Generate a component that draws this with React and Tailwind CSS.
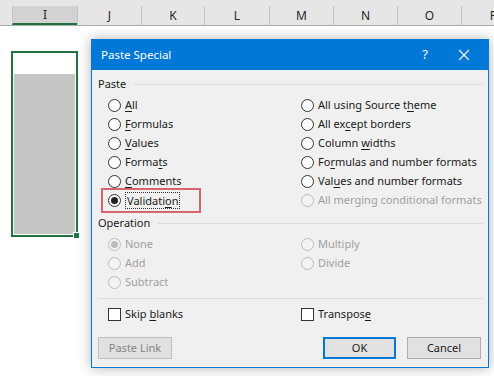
import React from 'react';

const COLS = [
  { label: 'I', w: 65, selected: true },
  { label: 'J', w: 64 },
  { label: 'K', w: 63 },
  { label: 'L', w: 65 },
  { label: 'M', w: 64 },
  { label: 'N', w: 64 },
  { label: 'O', w: 64 },
  { label: 'P', w: 64 },
];

// text with one underlined access key
const Label = ({ text, k }) => {
  if (k === undefined) return <span>{text}</span>;
  return (
    <span>
      {text.slice(0, k)}
      <span className="underline underline-offset-2">{text[k]}</span>
      {text.slice(k + 1)}
    </span>
  );
};

const Radio = ({ text, k, checked = false, disabled = false, focus = false }) => (
  <div className={`flex items-center h-[19px] gap-[4px] whitespace-nowrap ${disabled ? 'text-[#a0a0a0]' : 'text-[#1a1a1a]'}`}>
    <span
      className={`w-[13px] h-[13px] rounded-full border flex items-center justify-center shrink-0 ${
        disabled ? 'border-[#bcbcbc] bg-[#f3f3f3]' : 'border-[#333] bg-white'
      }`}
    >
      {checked && (
        <span className={`w-[7px] h-[7px] rounded-full ${disabled ? 'bg-[#bcbcbc]' : 'bg-[#222]'}`}></span>
      )}
    </span>
    <span className={focus ? 'border border-dotted border-[#333] px-[1px] leading-[15px]' : ''}>
      <Label text={text} k={k} />
    </span>
  </div>
);

const Check = ({ text, k }) => (
  <div className="flex items-center h-[19px] gap-[4px] text-[#1a1a1a] whitespace-nowrap">
    <span className="w-[13px] h-[13px] border border-[#333] bg-white shrink-0"></span>
    <Label text={text} k={k} />
  </div>
);

const GroupLabel = ({ children }) => (
  <div className="flex items-center gap-[8px] pr-[5px] h-[16px] text-[#1a1a1a]">
    <span>{children}</span>
    <span className="flex-1 h-px bg-[#dcdcdc]"></span>
  </div>
);

export default function App() {
  return (
    <div className="relative w-[494px] h-[376px] bg-white overflow-hidden font-['Segoe_UI','Noto_Sans',sans-serif]">
      {/* column headers */}
      <div className="h-[6px] bg-[#e6e6e6]"></div>
      <div className="flex h-[20px] bg-[#e6e6e6] border-b border-[#ababab] text-[#262626] text-[12px]">
        <div className="w-[12px] shrink-0"></div>
        {COLS.map((c) => (
          <div
            key={c.label}
            style={{ width: c.w }}
            className={`shrink-0 flex items-center justify-center border-l border-[#c4c4c4] ${
              c.selected ? 'bg-[#d2d2d2] border-b-2 border-b-[#217346]' : ''
            }`}
          >
            {c.label}
          </div>
        ))}
      </div>

      {/* selected range */}
      <div className="ml-[11px] mt-[25px] w-[67px] h-[186px] border-2 border-[#217346] relative">
        <div className="mt-[21px] ml-px w-[61px] h-[160px] bg-[#c6c6c6]"></div>
        <span className="absolute -right-[4px] -bottom-[4px] w-[7px] h-[7px] bg-[#217346] border border-white"></span>
      </div>

      {/* Paste Special dialog */}
      <div className="absolute left-[91px] top-[39px] w-[398px] h-[329px] border border-[#0078d7] bg-[#f0f0f0] shadow-[0_0_12px_rgba(0,0,0,0.3)] flex flex-col text-[11px]">
        <div className="h-[30px] bg-[#0078d7] text-white flex items-center pl-[9px] shrink-0">
          <span className="flex-1 text-[11.5px]">Paste Special</span>
          <span className="w-[18px] text-center mr-[24px] text-[13px]">?</span>
          <svg width="12" height="12" viewBox="0 0 12 12" className="mr-[18px]">
            <path d="M1 1L11 11M11 1L1 11" stroke="white" strokeWidth="1.1" />
          </svg>
        </div>

        <div className="pl-[6px] pt-[6px]">
          <GroupLabel>Paste</GroupLabel>
          <div className="grid grid-cols-[193px_1fr] pl-[10px] mt-[4px]">
            <div className="flex flex-col">
              <Radio text="All" k={0} />
              <Radio text="Formulas" k={0} />
              <Radio text="Values" k={0} />
              <Radio text="Formats" k={5} />
              <Radio text="Comments" k={0} />
              <div className="relative">
                <Radio text="Validation" k={8} checked focus />
                <span className="absolute -left-[7px] -top-[3px] w-[100px] h-[25px] border-2 border-[#d8646f]"></span>
              </div>
            </div>
            <div className="flex flex-col">
              <Radio text="All using Source theme" k={18} />
              <Radio text="All except borders" k={6} />
              <Radio text="Column widths" k={7} />
              <Radio text="Formulas and number formats" k={2} />
              <Radio text="Values and number formats" k={3} />
              <Radio text="All merging conditional formats" disabled />
            </div>
          </div>

          <div className="mt-[5px]">
            <GroupLabel>Operation</GroupLabel>
          </div>
          <div className="grid grid-cols-[193px_1fr] pl-[10px] mt-[4px]">
            <div className="flex flex-col">
              <Radio text="None" checked disabled />
              <Radio text="Add" disabled />
              <Radio text="Subtract" disabled />
            </div>
            <div className="flex flex-col">
              <Radio text="Multiply" disabled />
              <Radio text="Divide" disabled />
            </div>
          </div>

          <div className="mt-[6px] mr-[5px] h-px bg-[#dcdcdc]"></div>

          <div className="grid grid-cols-[193px_1fr] pl-[10px] mt-[6px]">
            <Check text="Skip blanks" k={5} />
            <Check text="Transpose" k={8} />
          </div>

          <div className="flex items-center mt-[13px] pr-[7px]">
            <div className="w-[74px] h-[22px] border border-[#bfbfbf] bg-[#e1e1e1] text-[#838383] flex items-center justify-center">
              Paste Link
            </div>
            <div className="flex-1"></div>
            <div className="w-[73px] h-[22px] border-2 border-[#0078d7] bg-[#e1e1e1] text-[#1a1a1a] flex items-center justify-center">
              OK
            </div>
            <div className="w-[74px] h-[22px] ml-[11px] border border-[#adadad] bg-[#e1e1e1] text-[#1a1a1a] flex items-center justify-center">
              Cancel
            </div>
          </div>
        </div>
      </div>
    </div>
  );
}
